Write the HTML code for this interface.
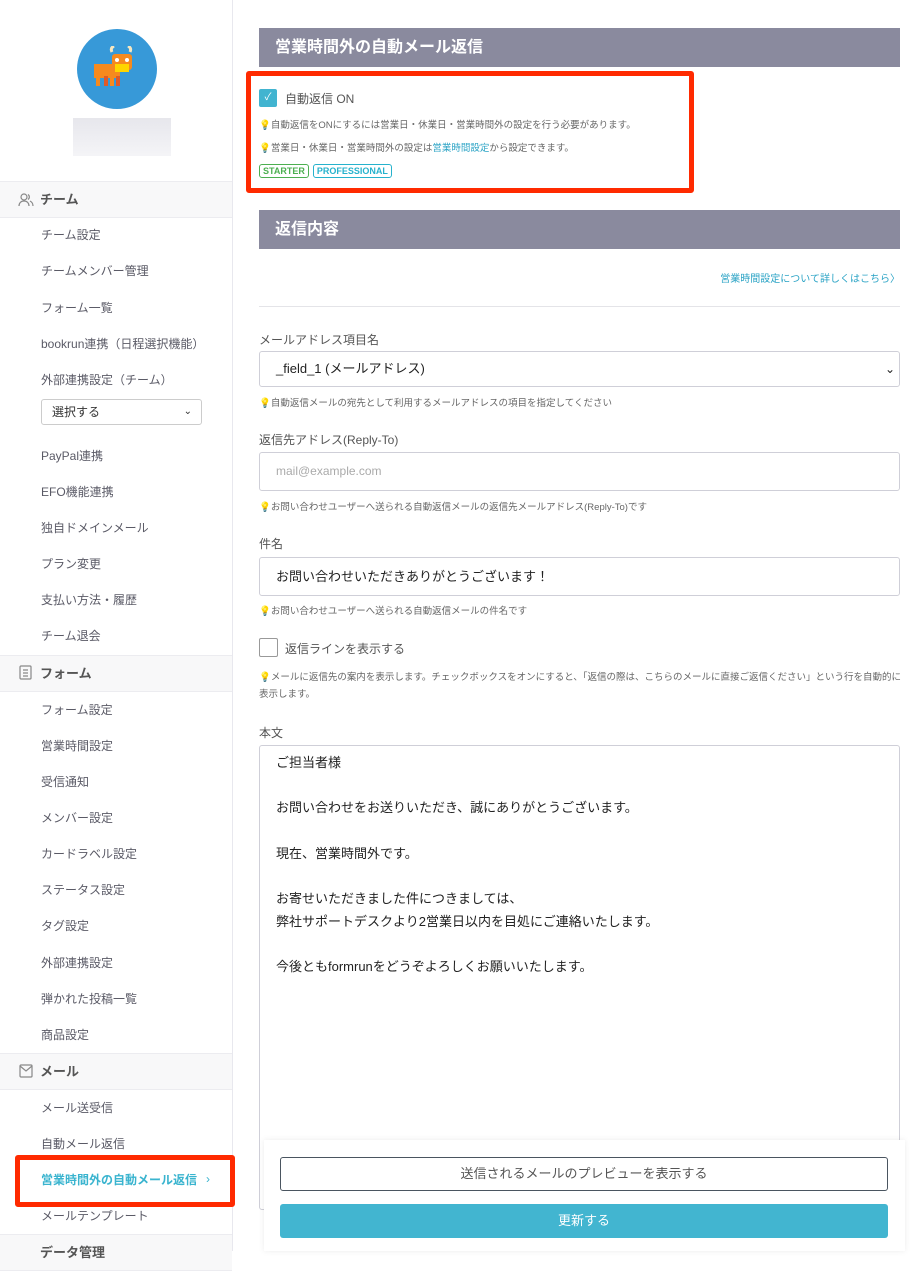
<!DOCTYPE html>
<html><head><meta charset="utf-8"><style>
*{box-sizing:border-box;margin:0;padding:0}
body{width:922px;height:1251px;overflow:hidden;background:#fff;font-family:"Liberation Sans","Noto Sans CJK JP",sans-serif;color:#333;position:relative}
.abs{position:absolute}
#side{position:absolute;left:0;top:0;width:233px;height:1251px;border-right:1px solid #e8e8ee;background:#fff}
.sh{position:absolute;left:0;width:232px;height:37px;background:#f8f8f9;border-top:1px solid #ececf0;border-bottom:1px solid #ececf0;font-size:13px;font-weight:bold;color:#555;padding-left:40px;line-height:36px}
.si{position:absolute;left:41px;font-size:12px;color:#5a5a66;line-height:14px}
.hd{position:absolute;left:259px;width:641px;height:39px;background:#8a8a9e;color:#fff;font-size:16px;font-weight:bold;padding-left:16px;line-height:39px}
.lbl{position:absolute;left:259px;font-size:12px;color:#555}
.hint{position:absolute;left:259px;font-size:9.5px;color:#666}
.inp{position:absolute;left:259px;width:641px;border:1px solid #cfcfd8;border-radius:3px;background:#fff;font-size:13px;padding-left:16px}
.tag{display:inline-block;font-size:9px;font-weight:bold;border:1px solid;border-radius:3px;padding:1px 3px;margin-right:4px}
</style></head><body>
<div id="side">
<div class="abs" style="left:77px;top:29px;width:80px;height:80px;border-radius:50%;background:#3799d8"></div>
<svg class="abs" style="left:92px;top:46px" width="50" height="44" viewBox="0 0 50 44"><path d="M20 6 q-2 -4 2 -6 M38 6 q2 -4 -2 -6" stroke="#f5e6c0" stroke-width="3" fill="none"/><rect x="2" y="18" width="26" height="14" fill="#f68a1e"/><rect x="4" y="30" width="4" height="10" fill="#f68a1e"/><rect x="12" y="30" width="4" height="10" fill="#e05a28"/><rect x="18" y="30" width="4" height="10" fill="#f68a1e"/><rect x="24" y="30" width="4" height="10" fill="#e05a28"/><rect x="20" y="8" width="20" height="16" rx="3" fill="#f68a1e"/><rect x="23" y="18" width="14" height="8" fill="#ffd600"/><circle cx="25" cy="14" r="2" fill="#fff"/><circle cx="35" cy="14" r="2" fill="#fff"/></svg>
<div class="abs" style="left:73px;top:118px;width:98px;height:38px;background:linear-gradient(#dcdce4,#f0f0f4);opacity:.7"></div>
<div class="sh" style="top:181px">チーム</div>
<svg class="abs" style="left:18px;top:193px" width="16" height="14" viewBox="0 0 16 14" fill="none" stroke="#888" stroke-width="1.2"><circle cx="6" cy="4" r="3"/><path d="M1 13c0-3 2-5 5-5s5 2 5 5M10 1.5a3 3 0 010 5M12 8c2 1 3 3 3 5"/></svg>
<div class="si" style="top:228px">チーム設定</div>
<div class="si" style="top:264px">チームメンバー管理</div>
<div class="si" style="top:301px">フォーム一覧</div>
<div class="si" style="top:337px">bookrun連携（日程選択機能）</div>
<div class="si" style="top:373px">外部連携設定（チーム）</div>
<div class="abs" style="left:41px;top:399px;width:161px;height:26px;border:1px solid #ccc;border-radius:3px;font-size:12px;padding-left:10px;line-height:24px;color:#333">選択する<span style="position:absolute;right:9px;font-size:10px">&#8964;</span></div>
<div class="si" style="top:449px">PayPal連携</div>
<div class="si" style="top:485px">EFO機能連携</div>
<div class="si" style="top:521px">独自ドメインメール</div>
<div class="si" style="top:557px">プラン変更</div>
<div class="si" style="top:593px">支払い方法・履歴</div>
<div class="si" style="top:629px">チーム退会</div>
<div class="sh" style="top:655px">フォーム</div>
<svg class="abs" style="left:19px;top:665px" width="13" height="15" viewBox="0 0 13 15" fill="none" stroke="#888" stroke-width="1.2"><rect x="1" y="1" width="11" height="13" rx="1"/><path d="M4 5h5M4 8h5M4 11h5"/></svg>
<div class="si" style="top:703px">フォーム設定</div>
<div class="si" style="top:739px">営業時間設定</div>
<div class="si" style="top:775px">受信通知</div>
<div class="si" style="top:811px">メンバー設定</div>
<div class="si" style="top:847px">カードラベル設定</div>
<div class="si" style="top:883px">ステータス設定</div>
<div class="si" style="top:919px">タグ設定</div>
<div class="si" style="top:956px">外部連携設定</div>
<div class="si" style="top:992px">弾かれた投稿一覧</div>
<div class="si" style="top:1028px">商品設定</div>
<div class="sh" style="top:1053px">メール</div>
<svg class="abs" style="left:19px;top:1064px" width="14" height="14" viewBox="0 0 14 14" fill="none" stroke="#888" stroke-width="1.2"><rect x="1" y="1" width="12" height="12" rx="1"/><path d="M1 2l6 5 6-5"/></svg>
<div class="si" style="top:1101px">メール送受信</div>
<div class="si" style="top:1137px">自動メール返信</div>
<div class="abs" style="left:15px;top:1155px;width:220px;height:52px;border:5px solid #ff2a00;border-radius:3px"></div>
<div class="si" style="top:1173px;color:#3ab4cf;font-weight:bold">営業時間外の自動メール返信</div>
<div class="abs" style="left:206px;top:1172px;color:#3ab4cf;font-size:12px">›</div>
<div class="si" style="top:1209px">メールテンプレート</div>
<div class="sh" style="top:1234px">データ管理</div>
</div>

<div class="hd" style="top:28px">営業時間外の自動メール返信</div>
<div class="abs" style="left:246px;top:71px;width:448px;height:122px;border:5px solid #ff2a00;border-radius:3px"></div>
<div class="abs" style="left:259px;top:89px;width:18px;height:18px;background:#41b4d0;border-radius:2px;color:#fff;font-size:10px;text-align:center;line-height:18px">✓</div>
<div class="abs" style="left:285px;top:90px;font-size:12px;color:#555">自動返信 ON</div>
<div class="hint" style="top:117px">💡自動返信をONにするには営業日・休業日・営業時間外の設定を行う必要があります。</div>
<div class="hint" style="top:140px">💡営業日・休業日・営業時間外の設定は<span style="color:#2aa3c5">営業時間設定</span>から設定できます。</div>
<div class="abs" style="left:259px;top:161px"><span class="tag" style="color:#4caf50">STARTER</span><span class="tag" style="color:#26b2cc">PROFESSIONAL</span></div>

<div class="hd" style="top:210px">返信内容</div>
<div class="abs" style="right:22px;top:270px;font-size:10px;color:#2aa3c5">営業時間設定について詳しくはこちら〉</div>
<div class="abs" style="left:259px;top:306px;width:641px;height:1px;background:#e4e4e8"></div>

<div class="lbl" style="top:331px">メールアドレス項目名</div>
<div class="inp" style="top:351px;height:36px;line-height:34px;color:#222">_field_1 (メールアドレス)<span style="position:absolute;right:4px;font-size:12px">&#8964;</span></div>
<div class="hint" style="top:395px">💡自動返信メールの宛先として利用するメールアドレスの項目を指定してください</div>
<div class="lbl" style="top:431px">返信先アドレス(Reply-To)</div>
<div class="inp" style="top:452px;height:39px;line-height:37px;color:#aaa;font-size:12px">mail@example.com</div>
<div class="hint" style="top:499px">💡お問い合わせユーザーへ送られる自動返信メールの返信先メールアドレス(Reply-To)です</div>
<div class="lbl" style="top:535px">件名</div>
<div class="inp" style="top:557px;height:39px;line-height:37px;color:#222">お問い合わせいただきありがとうございます！</div>
<div class="hint" style="top:603px">💡お問い合わせユーザーへ送られる自動返信メールの件名です</div>
<div class="abs" style="left:259px;top:638px;width:19px;height:19px;border:1px solid #999;border-radius:2px"></div>
<div class="abs" style="left:285px;top:640px;font-size:12px;color:#555">返信ラインを表示する</div>
<div class="hint" style="top:669px;line-height:17px;width:645px">💡メールに返信先の案内を表示します。チェックボックスをオンにすると、「返信の際は、こちらのメールに直接ご返信ください」という行を自動的に表示します。</div>
<div class="lbl" style="top:724px">本文</div>
<div class="inp" style="top:745px;height:465px;padding-top:6px;line-height:22.7px;color:#222">ご担当者様<br><br>お問い合わせをお送りいただき、誠にありがとうございます。<br><br>現在、営業時間外です。<br><br>お寄せいただきました件につきましては、<br>弊社サポートデスクより2営業日以内を目処にご連絡いたします。<br><br>今後ともformrunをどうぞよろしくお願いいたします。</div>

<div class="abs" style="left:264px;top:1140px;width:641px;height:111px;background:#fff;box-shadow:0 0 6px rgba(0,0,0,.08)"></div>
<div class="abs" style="left:280px;top:1157px;width:608px;height:34px;border:1px solid #4a5560;border-radius:3px;text-align:center;line-height:32px;font-size:13px;color:#555">送信されるメールのプレビューを表示する</div>
<div class="abs" style="left:280px;top:1204px;width:608px;height:34px;background:#42b5d0;border-radius:3px;text-align:center;line-height:34px;font-size:13px;color:#fff">更新する</div>
</body></html>
